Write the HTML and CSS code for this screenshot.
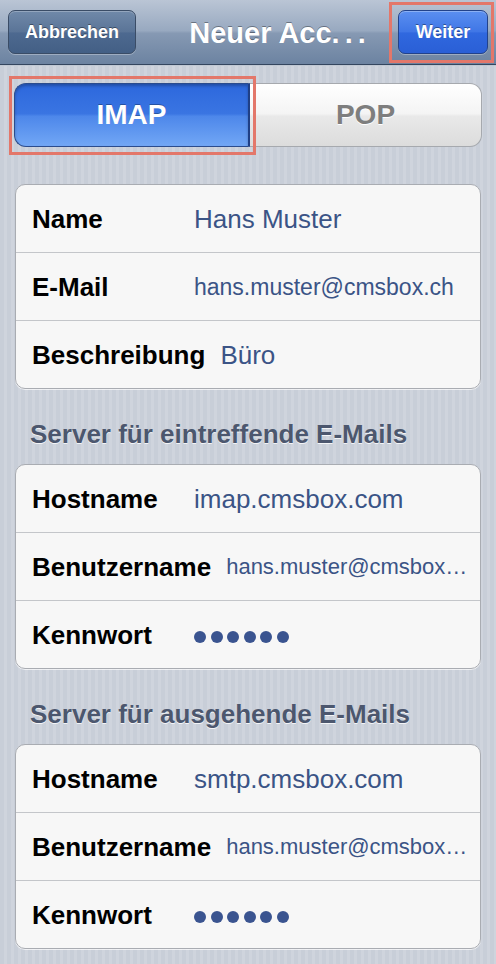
FILE: index.html
```html
<!DOCTYPE html>
<html lang="de">
<head>
    <meta charset="UTF-8">
    <meta name="viewport" content="width=device-width, initial-scale=1.0">
    <title>Neuer Account</title>
    <link rel="stylesheet" href="styles.css">
</head>
<body>
    <header class="navbar">
        <button class="nav-btn cancel">Abbrechen</button>
        <h1 class="nav-title">Neuer Acc<span class="more">...</span></h1>
        <button class="nav-btn primary marked">Weiter</button>
    </header>

    <main class="content">
        <div class="segmented">
            <button class="segment active marked">IMAP</button>
            <button class="segment">POP</button>
        </div>

        <div class="group">
            <div class="row">
                <span class="label">Name</span>
                <span class="value">Hans Muster</span>
            </div>
            <div class="row">
                <span class="label">E-Mail</span>
                <span class="value small">hans.muster@cmsbox.ch</span>
            </div>
            <div class="row">
                <span class="label">Beschreibung</span>
                <span class="value">Büro</span>
            </div>
        </div>

        <h2 class="section-title">Server für eintreffende E-Mails</h2>
        <div class="group">
            <div class="row">
                <span class="label">Hostname</span>
                <span class="value">imap.cmsbox.com</span>
            </div>
            <div class="row">
                <span class="label">Benutzername</span>
                <span class="value smaller">hans.muster@cmsbox…</span>
            </div>
            <div class="row">
                <span class="label">Kennwort</span>
                <span class="password"><i></i><i></i><i></i><i></i><i></i><i></i></span>
            </div>
        </div>

        <h2 class="section-title">Server für ausgehende E-Mails</h2>
        <div class="group">
            <div class="row">
                <span class="label">Hostname</span>
                <span class="value">smtp.cmsbox.com</span>
            </div>
            <div class="row">
                <span class="label">Benutzername</span>
                <span class="value smaller">hans.muster@cmsbox…</span>
            </div>
            <div class="row">
                <span class="label">Kennwort</span>
                <span class="password"><i></i><i></i><i></i><i></i><i></i><i></i></span>
            </div>
        </div>
    </main>
</body>
</html>
```

FILE: styles.css
```css
body {
    margin: 0;
    min-height: 964px;
    font-family: "Liberation Sans", Arial, Helvetica, sans-serif;
    background-color: #cbd1db;
    background-image: repeating-linear-gradient(90deg, #c8ced8 0, #c8ced8 4px, #cfd4dd 4px, #cfd4dd 7px);
}

/* navigation bar */
.navbar {
    display: flex;
    align-items: flex-start;
    height: 65px;
    padding: 10px 8px 0;
    box-sizing: border-box;
    background: linear-gradient(#bac5d5 0%, #98a9c0 48%, #8699b3 52%, #6c83a1 100%);
    border-bottom: 1px solid #34465f;
    box-shadow: 0 1px 0 #c0c8d3;
}
.nav-btn {
    height: 44px;
    border-radius: 7px;
    font-family: inherit;
    font-size: 18px;
    font-weight: bold;
    color: #fff;
    text-shadow: 0 -1px 0 rgba(0, 0, 0, 0.4);
    padding: 0;
    cursor: pointer;
}
.cancel {
    width: 128px;
    border: 1px solid #3a4c66;
    background: linear-gradient(#7089a9 0%, #5a7497 50%, #4d6990 52%, #435f85 100%);
    box-shadow: inset 0 1px 0 rgba(255, 255, 255, 0.25), 0 1px 0 rgba(255, 255, 255, 0.3);
}
.primary {
    width: 90px;
    border: 1px solid #22428a;
    background: linear-gradient(#5b8ff0 0%, #3f76e6 50%, #3068df 52%, #2a5fd6 100%);
    box-shadow: inset 0 1px 0 rgba(255, 255, 255, 0.3), 0 1px 0 rgba(255, 255, 255, 0.3);
}
.nav-title {
    flex: 1;
    margin: 1px 0 0;
    padding-left: 26px;
    line-height: 44px;
    text-align: center;
    font-size: 29px;
    font-weight: bold;
    color: #fff;
    text-shadow: 0 -1px 0 rgba(0, 0, 0, 0.35);
    white-space: nowrap;
}
.nav-title .more {
    letter-spacing: 5px;
}

/* annotation frames (square, drawn over the control) */
.marked {
    position: relative;
}
.marked::after {
    content: "";
    position: absolute;
    border: 3px solid #e3776a;
    pointer-events: none;
}
.nav-btn.marked::after {
    top: -9px;
    bottom: -10px;
    left: -10px;
    right: -7px;
}
.segment.marked::after {
    top: -8px;
    bottom: -9px;
    left: -6px;
    right: -8px;
}

.content {
    padding: 18px 0 0;
}

/* segmented control */
.segmented {
    display: flex;
    height: 64px;
    margin: 0 14px 37px;
}
.segment {
    flex: 1;
    font-family: inherit;
    font-size: 28px;
    font-weight: bold;
    padding: 0;
    cursor: pointer;
}
.segment.active {
    flex: 0 0 236px;
    color: #fff;
    text-shadow: 0 -1px 0 rgba(0, 0, 0, 0.3);
    border: 1px solid #2b4c8d;
    border-right: 2px solid #1f3f86;
    border-radius: 12px 0 0 12px;
    background: linear-gradient(#2d68dd 0%, #3a75e2 48%, #4d87ea 52%, #72a7f5 100%);
    box-shadow: inset 0 2px 3px rgba(0, 0, 0, 0.25);
}
.segment:not(.active) {
    color: #7e7e7e;
    text-shadow: 0 1px 0 #fff;
    border: 1px solid #a6a9ae;
    border-left: none;
    border-radius: 0 12px 12px 0;
    background: linear-gradient(#ffffff 0%, #f4f4f4 48%, #e9e9e9 52%, #dcdcdc 100%);
}

/* grouped table */
.group {
    margin: 0 15px;
    background-color: #f7f7f7;
    border: 1px solid #a9acb2;
    border-radius: 10px;
    box-shadow: 0 1px 0 rgba(255, 255, 255, 0.7);
}
.row {
    display: flex;
    align-items: center;
    height: 67px;
    padding: 0 14px 0 16px;
}
.row + .row {
    border-top: 1px solid #c4c6ca;
}
.label {
    flex: none;
    min-width: 147px;
    margin-right: 15px;
    font-size: 26px;
    font-weight: bold;
    line-height: 30px;
    color: #000;
}
.value {
    flex: 1;
    min-width: 0;
    font-size: 26px;
    line-height: 30px;
    color: #3b5486;
    white-space: nowrap;
}
.value.small {
    font-size: 23px;
}
.value.smaller {
    font-size: 22px;
}
.password {
    display: flex;
    gap: 4.5px;
    margin-top: 4px;
}
.password i {
    width: 12px;
    height: 12px;
    border-radius: 50%;
    background-color: #3a5490;
}

.section-title {
    margin: 30px 0 15px 30px;
    font-size: 26px;
    line-height: 30px;
    font-weight: bold;
    color: #4c576e;
    text-shadow: 0 1px 0 rgba(255, 255, 255, 0.8);
}
```
